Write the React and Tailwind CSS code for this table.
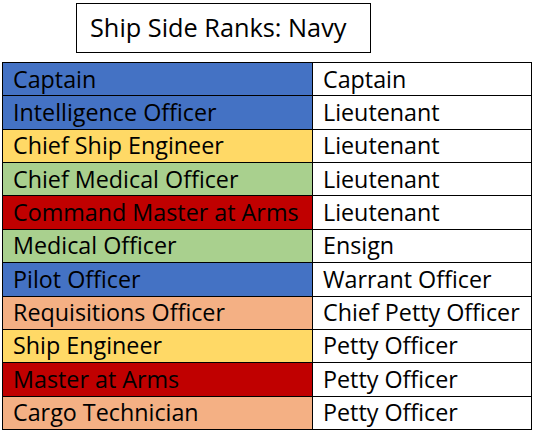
import React from "react";

const ranks = [
  { role: "Captain", rank: "Captain", color: "bg-[#4472c4]" },
  { role: "Intelligence Officer", rank: "Lieutenant", color: "bg-[#4472c4]" },
  { role: "Chief Ship Engineer", rank: "Lieutenant", color: "bg-[#ffd966]" },
  { role: "Chief Medical Officer", rank: "Lieutenant", color: "bg-[#a9d08e]" },
  { role: "Command Master at Arms", rank: "Lieutenant", color: "bg-[#c00000]" },
  { role: "Medical Officer", rank: "Ensign", color: "bg-[#a9d08e]" },
  { role: "Pilot Officer", rank: "Warrant Officer", color: "bg-[#4472c4]" },
  { role: "Requisitions Officer", rank: "Chief Petty Officer", color: "bg-[#f4b084]" },
  { role: "Ship Engineer", rank: "Petty Officer", color: "bg-[#ffd966]" },
  { role: "Master at Arms", rank: "Petty Officer", color: "bg-[#c00000]" },
  { role: "Cargo Technician", rank: "Petty Officer", color: "bg-[#f4b084]" },
];

const App = () => {
  return (
    <div className="w-[536px] h-[431px] bg-white text-black font-['Open_Sans','Lato',sans-serif] overflow-hidden">
      {/* Title */}
      <div className="ml-[76px] mt-[3px] w-[295px] h-[50px] border border-black flex items-center pl-[13px] text-[25.3px]">
        Ship Side Ranks: Navy
      </div>

      {/* Ranks table */}
      <div className="ml-[2px] mt-[9px] w-[530px] border-t border-x border-black">
        {ranks.map((r, idx) => (
          <div key={idx} className="flex h-[33.36px] border-b border-black text-[23.3px] leading-none">
            <div className={`w-[310px] border-r border-black flex items-center pl-[10px] ${r.color}`}>
              {r.role}
            </div>
            <div className="flex-1 flex items-center pl-[10px]">{r.rank}</div>
          </div>
        ))}
      </div>
    </div>
  );
};

export default App;
